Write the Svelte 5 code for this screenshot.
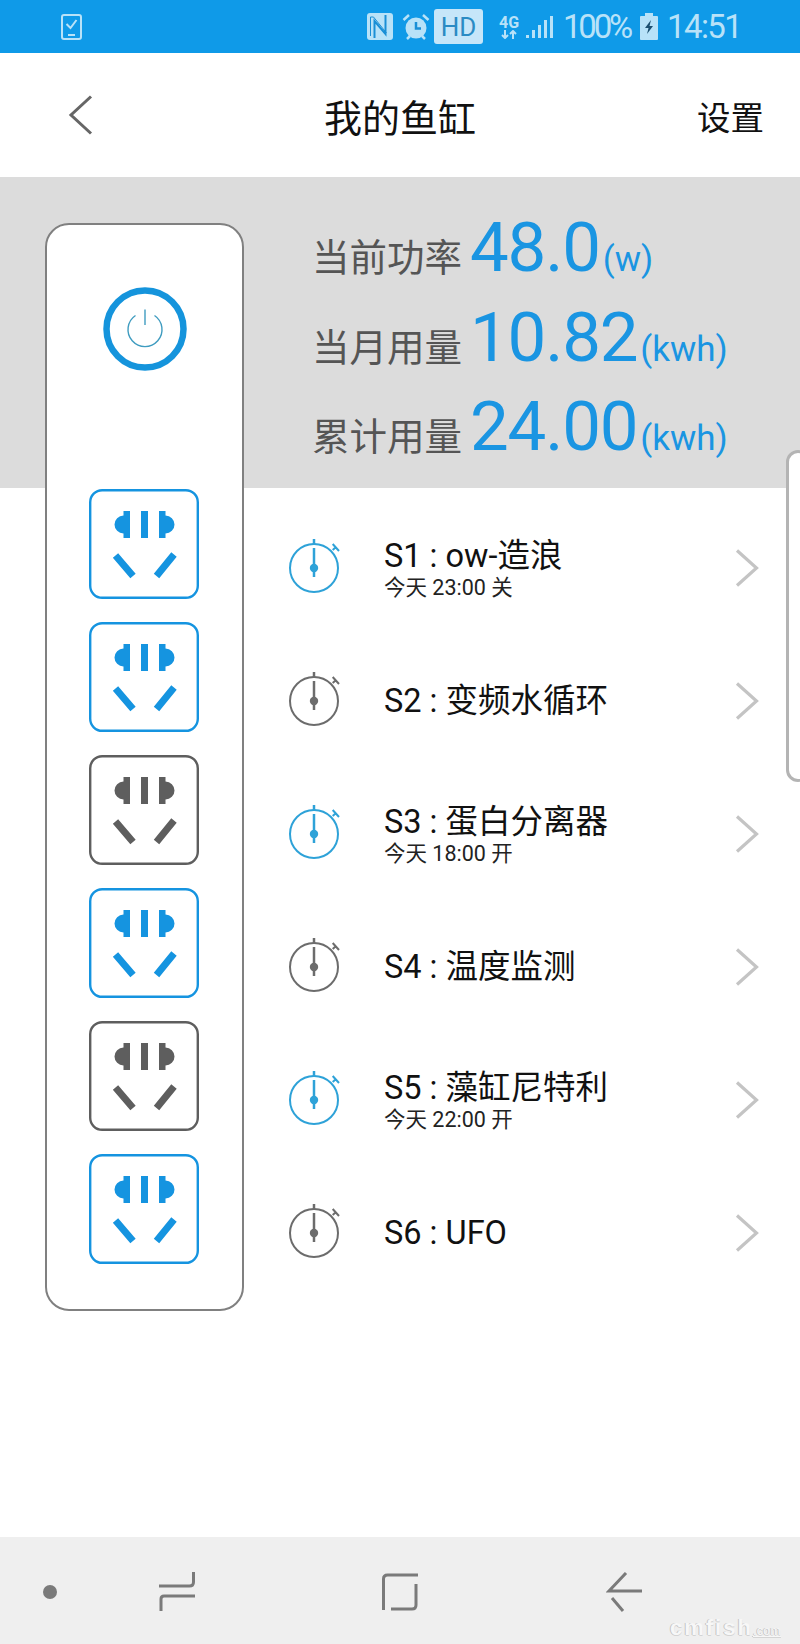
<script>
	const stats = [
		{ label: '当前功率', value: '48.0', unit: '(w)' },
		{ label: '当月用量', value: '10.82', unit: '(kwh)' },
		{ label: '累计用量', value: '24.00', unit: '(kwh)' }
	];

	const outlets = [
		{ name: 'S1 : ow-造浪', sub: '今天 23:00 关', on: true },
		{ name: 'S2 : 变频水循环', sub: '', on: false },
		{ name: 'S3 : 蛋白分离器', sub: '今天 18:00 开', on: true },
		{ name: 'S4 : 温度监测', sub: '', on: false },
		{ name: 'S5 : 藻缸尼特利', sub: '今天 22:00 开', on: true },
		{ name: 'S6 : UFO', sub: '', on: false }
	];

	// the socket faces on the strip do not follow the timer colours
	const sockets = [true, true, false, true, false, true];
</script>

<div class="page">
	<!-- Status bar -->
	<div class="status">
		<svg class="ic-task" width="21" height="26" viewBox="0 0 21 26" fill="none" stroke="#b8e2f8">
			<rect x="1" y="1" width="19" height="24" rx="2" stroke-width="2" />
			<path d="M5.500 10l4 4 6-8" stroke-width="2" />
			<path d="M7 21h7" stroke-width="2" />
		</svg>
		<svg class="ic-nfc" width="26" height="27" viewBox="0 0 26 27">
			<rect width="26" height="27" rx="3" fill="#b8e2f8" />
			<path d="M7.500 25V8l11 13V2" fill="none" stroke="#1a8fd6" stroke-width="2" />
			<path d="M3.500 23V4h3l13 16" fill="none" stroke="#1a8fd6" stroke-width="1" />
		</svg>
		<svg class="ic-alarm" width="28" height="28" viewBox="0 0 28 28" fill="none">
			<circle cx="14" cy="15" r="10.500" fill="#b8e2f8" />
			<path d="M14 9v6.500h5" stroke="#1a8fd6" stroke-width="2.500" />
			<path d="M1.500 7L7 2M26.500 7L21 2M5 26l3-3M23 26l-3-3" stroke="#b8e2f8" stroke-width="2.500" />
		</svg>
		<span class="hd">HD</span>
		<div class="net">
			<span>4G</span>
			<svg width="16" height="9" viewBox="0 0 16 9" fill="none" stroke="#b8e2f8" stroke-width="2">
				<path d="M4 0v7M1 5l3 3 3-3M12 9V2M9 4l3-3 3 3" />
			</svg>
		</div>
		<svg class="ic-signal" width="27" height="24" viewBox="0 0 27 24" fill="#b8e2f8">
			<rect x="0" y="20" width="3" height="3" />
			<rect x="6" y="15" width="3" height="8" />
			<rect x="12" y="10" width="3" height="13" />
			<rect x="18" y="5" width="3" height="18" />
			<rect x="24" y="1" width="3" height="22" />
		</svg>
		<span class="clock pct">100%</span>
		<svg class="ic-batt" width="18" height="27" viewBox="0 0 18 27">
			<path d="M5 0h8v3h4a1 1 0 0 1 1 1v22a1 1 0 0 1-1 1H1a1 1 0 0 1-1-1V4a1 1 0 0 1 1-1h4z" fill="#b8e2f8" />
			<path d="M11 7l-6 8h3.500L7 21l6-8H9.500z" fill="#1c4f70" />
		</svg>
		<span class="clock time">14:51</span>
	</div>

	<!-- Title bar -->
	<header>
		<svg class="back" width="25" height="40" viewBox="0 0 25 40" fill="none" stroke="#666" stroke-width="3">
			<path d="M23 1.500L3 20l20 18.500" />
		</svg>
		<h1>我的鱼缸</h1>
		<span class="settings">设置</span>
	</header>

	<div class="content">
		<!-- Power strip -->
		<div class="strip">
			<svg class="power" width="84" height="84" viewBox="0 0 84 84" fill="none">
				<circle cx="42" cy="42" r="38.500" stroke="#1594dc" stroke-width="6.500" />
				<path d="M32.500 28.500a17 17 0 1 0 19 0" stroke="#3f9cc0" stroke-width="1.400" />
				<path d="M42 22.500V38" stroke="#3f9cc0" stroke-width="1.400" />
			</svg>
			<div class="sockets">
				{#each sockets as on}
					<svg class="socket" class:on width="110" height="110" viewBox="0 0 110 110">
						<rect x="1.200" y="1.200" width="107.600" height="107.600" rx="12" fill="#fff" stroke="currentColor" stroke-width="2.400" />
						<path d="M41 22v27h-6.500v-4.500a9 9 0 0 1 0-18V22zM70 22v27h6.500v-4.500a9 9 0 0 0 0-18V22z" fill="currentColor" />
						<rect x="52" y="22" width="7" height="27" fill="currentColor" />
						<path d="M26.500 66.500L44 87M85 65.500L67.500 87" stroke="currentColor" stroke-width="7" fill="none" />
					</svg>
				{/each}
			</div>
		</div>

		<div class="right">
			<!-- Power figures -->
			<div class="stats">
				{#each stats as s}
					<div class="stat">
						<span class="label">{s.label}</span>
						<span class="value">{s.value}</span>
						<span class="unit">{s.unit}</span>
					</div>
				{/each}
			</div>

			<!-- Outlet list -->
			<div class="rows">
				{#each outlets as o}
					<div class="row">
						<svg class="timer" class:on={o.on} width="52" height="56" viewBox="0 0 52 56" fill="none" stroke="currentColor">
							<circle cx="26" cy="30" r="24" stroke-width="2" />
							<path d="M26 1v5" stroke-width="2.500" />
							<path d="M26 10v29" stroke-width="2.500" />
							<circle cx="26" cy="30" r="4.200" fill="currentColor" stroke="none" />
							<path d="M44.700 12l3.300-3M44.700 6l6.300 7" stroke-width="2" />
						</svg>
						<div class="text">
							<div class="name">{o.name}</div>
							{#if o.sub}
								<div class="sub">{o.sub}</div>
							{/if}
						</div>
						<svg class="chev" width="24" height="38" viewBox="0 0 24 38" fill="none" stroke="#c4c4c4" stroke-width="3.200">
							<path d="M2 1.500L21.500 19 2 36.500" />
						</svg>
					</div>
				{/each}
			</div>
		</div>

		<div class="handle"></div>
	</div>

	<!-- Navigation bar -->
	<nav>
		<svg width="14" height="14" viewBox="0 0 14 14"><circle cx="7" cy="7" r="7" fill="#7a7a7a" /></svg>
		<svg width="36" height="40" viewBox="0 0 36 40" fill="none" stroke="#7a7a7a" stroke-width="3">
			<path d="M34.500 0v10q0 4-4 4H0" />
			<path d="M2 39V27q0-3 3-3h31" />
		</svg>
		<svg width="36" height="38" viewBox="0 0 36 38" fill="none" stroke="#7a7a7a" stroke-width="3">
			<path d="M1.500 37V6q0-4 4-4H36" />
			<path d="M9 36h21q4 0 4-4V11" />
		</svg>
		<svg width="36" height="40" viewBox="0 0 36 40" fill="none" stroke="#7a7a7a" stroke-width="3">
			<path d="M20 1L3 19h33" />
			<path d="M6 26l11 13" />
		</svg>
	</nav>
	<div class="mark">cmfish<small>.com</small></div>
</div>

<style>
	:global(body) {
		margin: 0;
		background: #fff;
	}

	.page {
		position: relative;
		width: 800px;
		height: 1644px;
		overflow: hidden;
		font-family: Roboto, 'Noto Sans CJK SC', sans-serif;
		color: #1a1a1a;
	}

	.status {
		display: flex;
		align-items: center;
		height: 53px;
		background: #0f9ae8;
		color: #b8e2f8;
	}

	.ic-task { margin-left: 61px; }
	.ic-nfc { margin-left: 285px; }
	.ic-alarm { margin-left: 9px; }

	.hd {
		display: flex;
		align-items: center;
		justify-content: center;
		width: 49px;
		height: 35px;
		margin-left: 4px;
		border-radius: 3px;
		background: #c6e6f9;
		color: #2a8bc4;
		font-size: 26px;
	}

	.net {
		display: flex;
		flex-direction: column;
		align-items: center;
		width: 20px;
		margin-left: 16px;
		font-size: 16px;
		font-weight: 700;
		line-height: 15px;
	}

	.ic-signal { margin-left: 7px; }

	.clock {
		font-size: 33px;
		letter-spacing: -3.200px;
		white-space: nowrap;
	}

	.pct {
		width: 67px;
		margin-left: 10px;
	}

	.ic-batt { margin-left: 10px; }

	.time {
		margin-left: 9px;
		letter-spacing: -1.600px;
	}

	header {
		display: flex;
		align-items: center;
		height: 124px;
		padding-left: 68px;
	}

	h1 {
		width: 152px;
		margin: 0 0 0 231px;
		font-size: 38px;
		font-weight: 400;
		color: #111;
	}

	.settings {
		margin-left: 221px;
		font-size: 33.500px;
		color: #111;
	}

	.content {
		position: relative;
		display: flex;
		height: 1360px;
		padding: 46px 0 0 45px;
		box-sizing: border-box;
		background: linear-gradient(#dcdcdc 311px, #fff 311px);
	}

	.strip {
		display: flex;
		flex-direction: column;
		align-items: center;
		box-sizing: border-box;
		width: 199px;
		height: 1088px;
		border: 2px solid #808080;
		border-radius: 24px;
		background: #fff;
	}

	.power {
		margin-top: 62px;
		flex-shrink: 0;
	}

	.sockets {
		display: flex;
		flex-direction: column;
		gap: 23px;
		margin: 118px 1px 0 0;
	}

	.socket {
		display: block;
		color: #5e5e5e;
	}

	.socket.on { color: #1594e0; }

	.right {
		flex: 1;
		min-width: 0;
	}

	.stats {
		height: 278px;
		padding: 0 0 0 68px;
		box-sizing: border-box;
		white-space: nowrap;
	}

	.stat {
		display: flex;
		align-items: baseline;
		height: 89.500px;
	}

	.label {
		font-size: 37.500px;
		line-height: 49px;
		color: #555;
	}

	.value {
		margin-left: 8px;
		font-size: 69px;
		line-height: 49px;
		letter-spacing: -1.200px;
		color: #1a95e2;
	}

	.unit {
		margin-left: 3px;
		font-size: 35px;
		line-height: 49px;
		color: #1a95e2;
	}

	.row {
		display: flex;
		align-items: center;
		height: 133px;
		padding-left: 44px;
	}

	.timer {
		flex-shrink: 0;
		color: #6c6c6c;
		margin-top: -4px;
	}

	.timer.on { color: #2ea2d8; }

	.text {
		width: 351px;
		margin-left: 44px;
	}

	.name {
		font-size: 32.500px;
		line-height: 40px;
		color: #111;
	}

	.sub {
		font-size: 21.500px;
		line-height: 24px;
		color: #222;
	}

	.chev { flex-shrink: 0; }

	.handle {
		position: absolute;
		top: 273px;
		right: -10px;
		width: 18px;
		height: 326px;
		border: 3px solid #b4b4b4;
		border-radius: 12px;
		background: #fff;
	}

	nav {
		display: grid;
		grid-template-columns: 116px 223px 224px 36px;
		align-items: center;
		height: 107px;
		padding: 35px 0 0 43px;
		box-sizing: border-box;
		align-content: start;
		background: #efefef;
	}

	nav svg { display: block; }

	.mark {
		position: absolute;
		left: 670px;
		bottom: 3px;
		font-family: 'Liberation Sans', sans-serif;
		font-size: 22px;
		font-weight: 700;
		letter-spacing: 2px;
		color: #f7f7f7;
		text-shadow: -1px 0 #c4c4c4, 0 1px #d4d4d4;
	}

	.mark small {
		font-size: 12px;
		font-weight: 400;
		letter-spacing: 0.500px;
		text-decoration: underline;
	}
</style>
